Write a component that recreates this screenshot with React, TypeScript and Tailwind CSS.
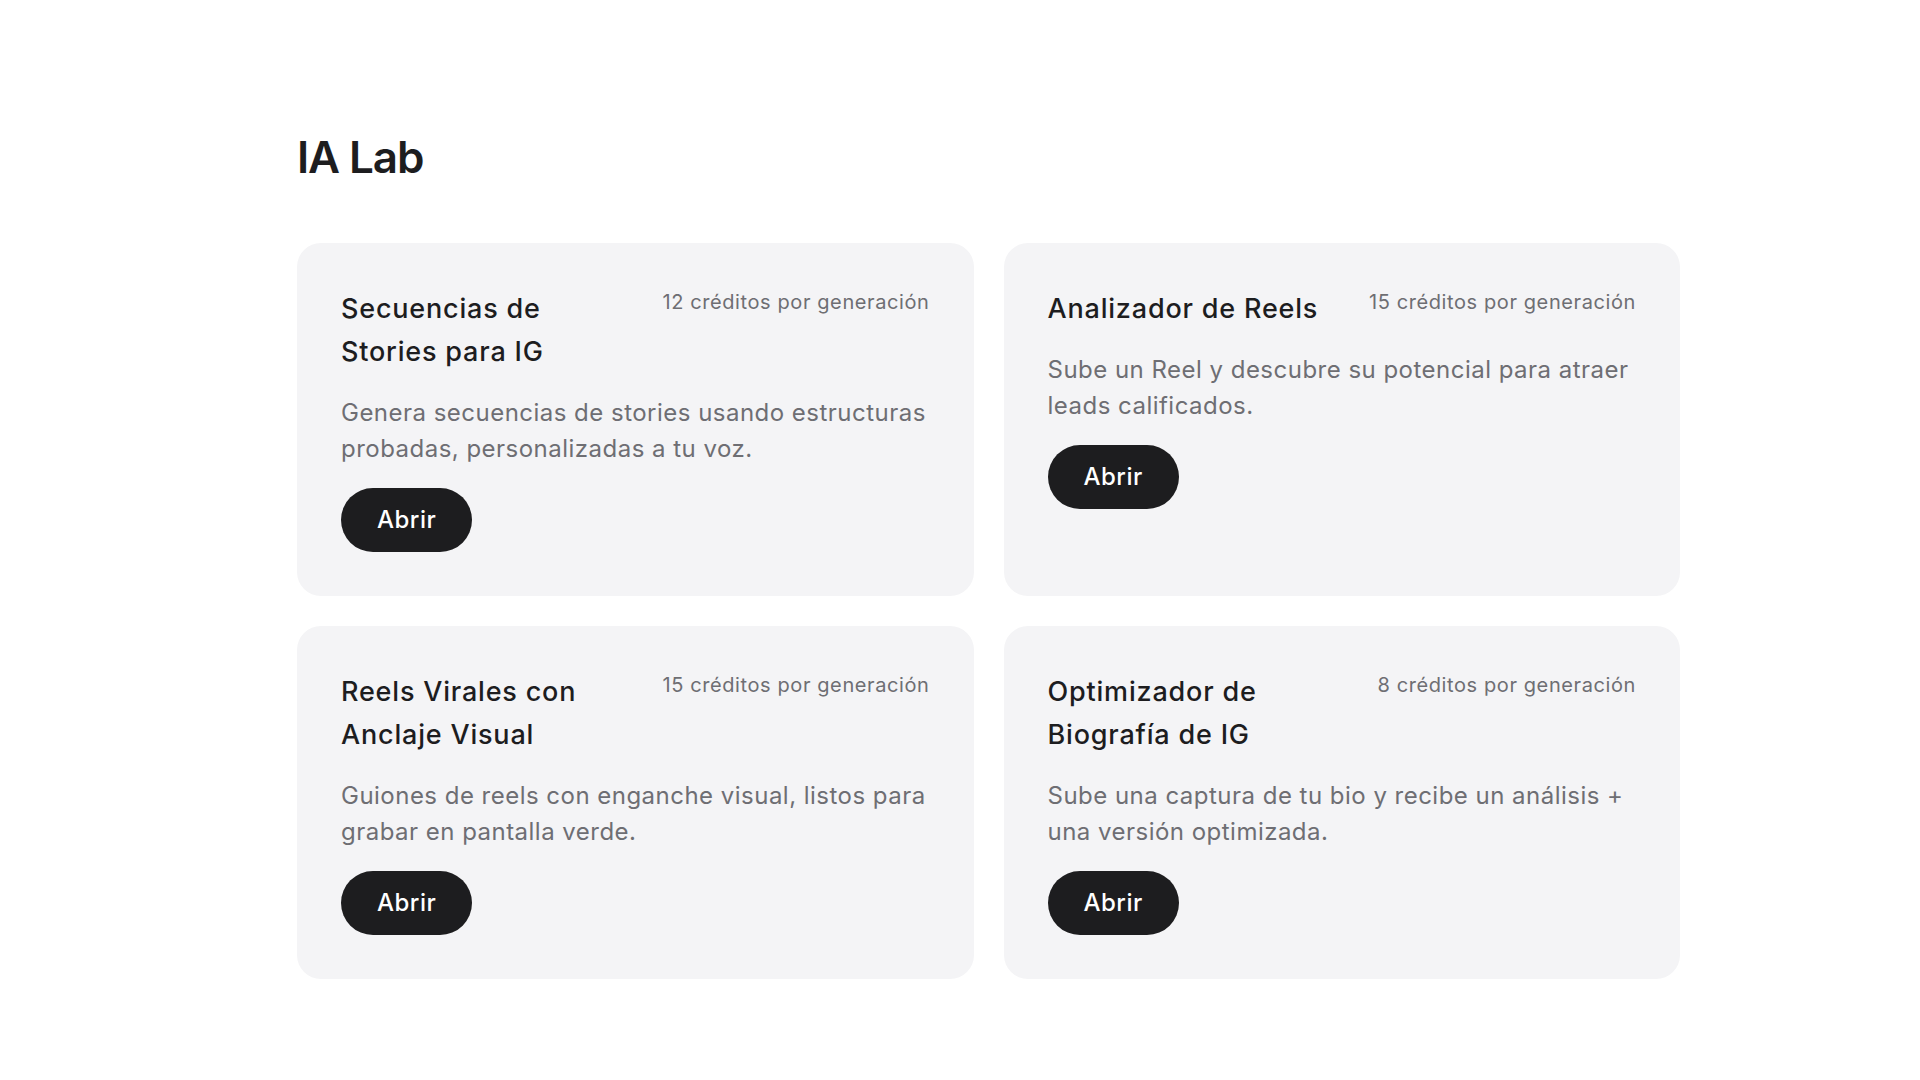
import React from 'react';

interface Tool {
  id: string;
  title: string;
  credits: number;
  description: string;
}

const tools: Tool[] = [
  {
    id: 'stories',
    title: 'Secuencias de Stories para IG',
    credits: 12,
    description: 'Genera secuencias de stories usando estructuras probadas, personalizadas a tu voz.',
  },
  {
    id: 'reels-analyzer',
    title: 'Analizador de Reels',
    credits: 15,
    description: 'Sube un Reel y descubre su potencial para atraer leads calificados.',
  },
  {
    id: 'viral-reels',
    title: 'Reels Virales con Anclaje Visual',
    credits: 15,
    description: 'Guiones de reels con enganche visual, listos para grabar en pantalla verde.',
  },
  {
    id: 'bio',
    title: 'Optimizador de Biografía de IG',
    credits: 8,
    description: 'Sube una captura de tu bio y recibe un análisis + una versión optimizada.',
  },
];

const ToolCard: React.FC<{ tool: Tool }> = ({ tool }) => (
  <div className="flex flex-col items-start rounded-[24px] bg-[#f4f4f6] p-11">
    <div className="flex w-full items-start justify-between gap-6">
      <h2 className="text-[27px] font-medium leading-[43px] tracking-[0.03em] text-[#1d1d1f]">{tool.title}</h2>
      <span className="shrink-0 whitespace-nowrap pt-px text-[20px] leading-7 tracking-[0.03em] text-[#6e6e73]">
        {tool.credits} créditos por generación
      </span>
    </div>
    <p className="mt-[22px] text-[24px] leading-9 tracking-[0.02em] text-[#6e6e73]">{tool.description}</p>
    <button className="mt-[21px] h-16 rounded-full bg-[#1d1d1f] px-9 text-[24px] font-medium tracking-[0.02em] text-white">
      Abrir
    </button>
  </div>
);

export default function App() {
  return (
    <div className="min-h-screen bg-white pt-[135px] pl-[297px] pr-[240px] font-['Inter',sans-serif]">
      <h1 className="mb-16 text-[44px] font-semibold leading-[44px] tracking-tight text-[#1d1d1f]">IA Lab</h1>
      <div className="grid grid-cols-2 gap-[30px]">
        {tools.map((tool) => (
          <ToolCard key={tool.id} tool={tool} />
        ))}
      </div>
    </div>
  );
}
